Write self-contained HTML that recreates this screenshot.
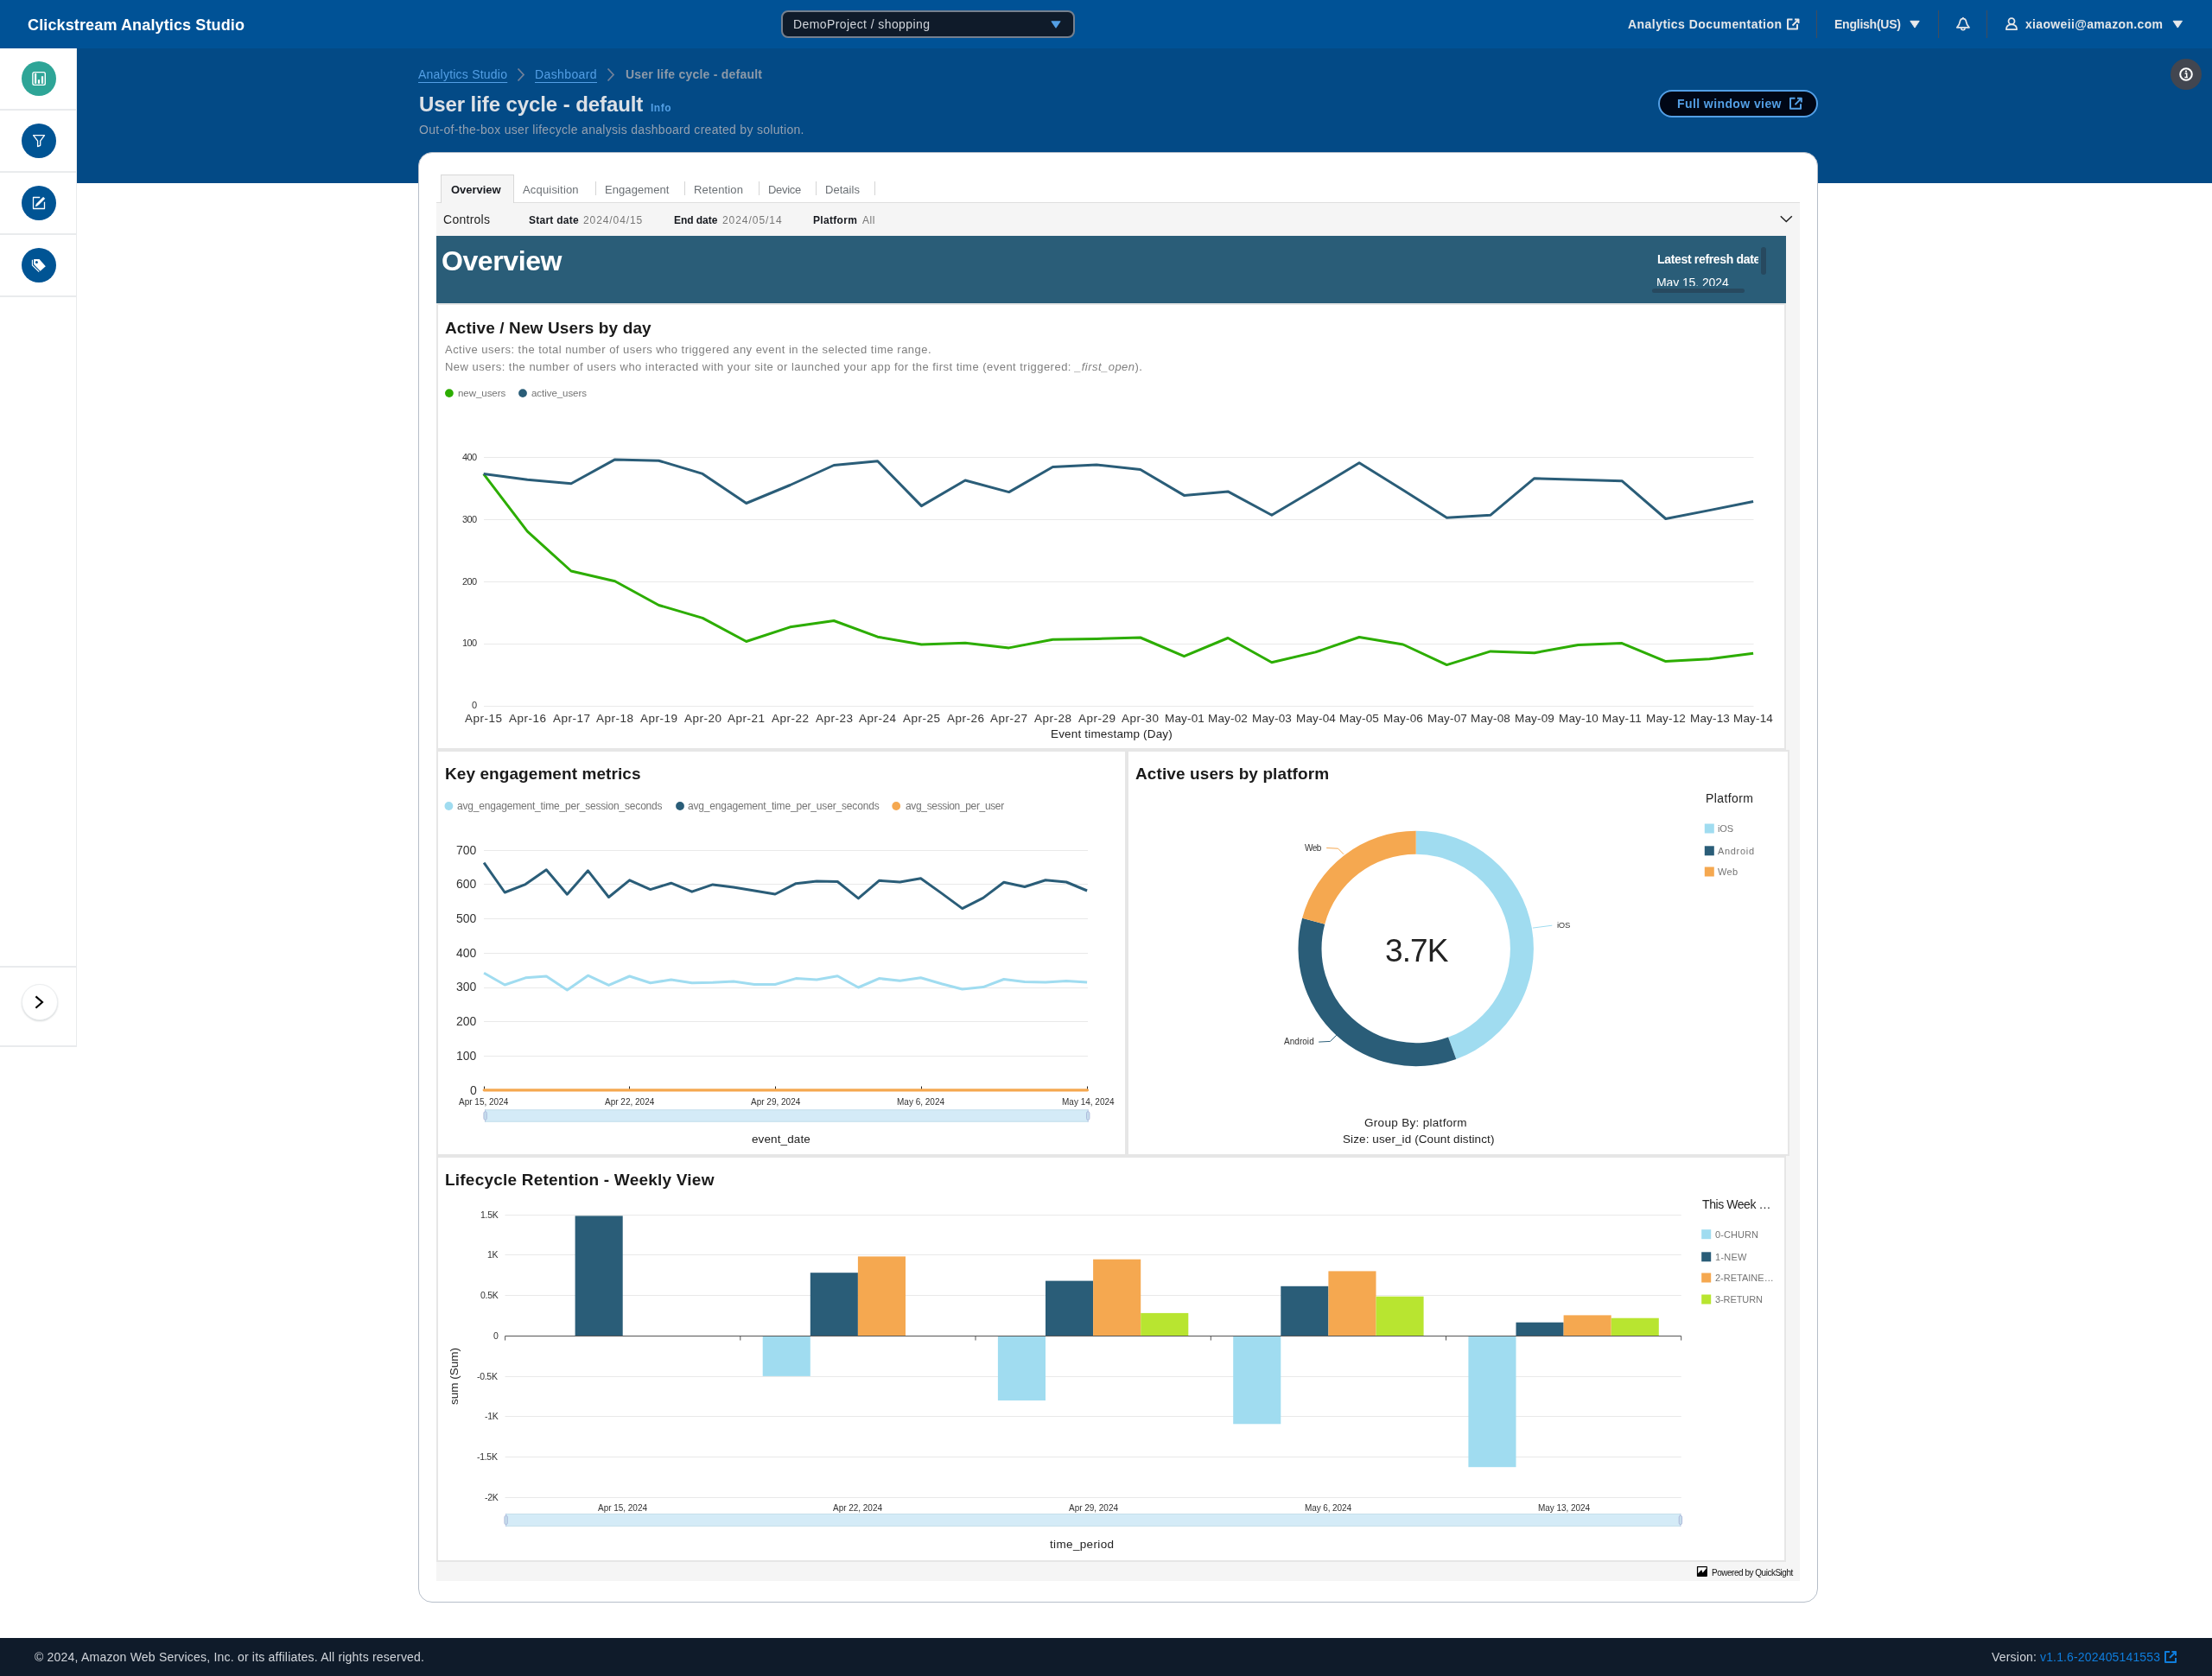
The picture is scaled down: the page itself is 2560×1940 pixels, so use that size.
<!DOCTYPE html>
<html lang="en"><head><meta charset="utf-8"><title>User life cycle - default | Clickstream Analytics Studio</title>
<style>
html,body{margin:0;padding:0;background:#fff;}
body{width:2560px;height:1940px;overflow:hidden;font-family:"Liberation Sans",sans-serif;}
#page{position:relative;width:2560px;height:1940px;overflow:hidden;background:#fff;-webkit-font-smoothing:antialiased;}
.t{will-change:transform;}
.t{position:absolute;white-space:nowrap;margin:0;padding:0;}
.b{position:absolute;box-sizing:border-box;}
svg{position:absolute;left:0;top:0;overflow:visible;}
a{color:inherit;text-decoration:none;}
.panel{position:absolute;box-sizing:border-box;background:#fff;border:2px solid #e6e6e6;}
</style></head><body><div id="page">

<header id="topnav">
<div class="b" style="left:0px;top:0px;width:2560px;height:56px;background:#005296;"></div>
<div class="t" style="left:32.40px;top:17.50px;font-size:18px;line-height:23px;color:#fff;font-weight:700;letter-spacing:0.133px;">Clickstream Analytics Studio</div>
<div class="b" style="left:904px;top:12px;width:340px;height:32px;background:#0f1b2a;border:2px solid #75808f;border-radius:8px;"></div>
<div class="t" style="left:918.00px;top:19.40px;font-size:14px;line-height:18px;color:#d1d5db;letter-spacing:0.409px;">DemoProject / shopping</div>
<svg width="2560" height="56" viewBox="0 0 2560 56"><path d="M1216.9 24.3h10.2q.6 0 .3.6l-4.9 7.3q-.5.7-1 0l-4.9-7.3q-.3-.6.3-.6z" fill="#539fe5"/></svg>
<a href="#" class="t" style="left:1884.40px;top:18.80px;font-size:14px;line-height:18px;color:#e4e6e9;font-weight:700;letter-spacing:0.453px;">Analytics Documentation</a>
<div class="t" style="left:2123.30px;top:18.80px;font-size:14px;line-height:18px;color:#e4e6e9;font-weight:700;letter-spacing:-0.233px;">English(US)</div>
<div class="t" style="left:2344.20px;top:18.80px;font-size:14px;line-height:18px;color:#e4e6e9;font-weight:700;letter-spacing:0.338px;">xiaoweii@amazon.com</div>
<div class="b" style="left:2102px;top:12px;width:1px;height:32px;background:#414d5c;"></div>
<div class="b" style="left:2243px;top:12px;width:1px;height:32px;background:#414d5c;"></div>
<div class="b" style="left:2299px;top:12px;width:1px;height:32px;background:#414d5c;"></div>
<svg width="2560" height="56" viewBox="0 0 2560 56" fill="none" stroke="#e4e6e9" stroke-width="2" stroke-linejoin="round">
<path d="M2074.5 22.5h-5.5v11h11v-5.5"/><path d="M2077 22.5h4.5v4.5M2081 23l-6.5 6.5"/>
<path d="M2210.8 24.3h10.4l-5.2 7.8z" fill="#e9ebed" stroke-width="1"/>
<path d="M2515.1 24.3h10.4l-5.2 7.8z" fill="#e9ebed" stroke-width="1"/>
<path d="M2264.800 31.800C2266.600 30 2268 27.600 2268.300 25.200C2268.600 22.900 2270 21.700 2271.900 21.700C2273.800 21.700 2275.200 22.900 2275.500 25.200C2275.800 27.600 2277.200 30 2279 31.800Z" stroke-width="1.700"/><path d="M2271.900 20.100v1.600" stroke-width="1.700"/><path d="M2269.700 32.600a2.200 2.200 0 0 0 4.400 0" stroke-width="1.600"/>
<circle cx="2328" cy="24.600" r="3.500" stroke-width="1.800"/><path d="M2321.900 34.100c0-3.900 2.500-5.800 6.100-5.800s6.100 1.900 6.100 5.800z" stroke-width="1.800"/>
</svg>
</header>
<section id="pagehead">
<div class="b" style="left:89px;top:56px;width:2471px;height:155.5px;background:#034a86;"></div>
<a href="#" class="t" style="left:484.00px;top:77.00px;font-size:14px;line-height:18px;color:#539fe5;letter-spacing:0.226px;text-decoration:underline;text-underline-offset:4px;text-decoration-thickness:1px;">Analytics Studio</a>
<a href="#" class="t" style="left:619.20px;top:77.00px;font-size:14px;line-height:18px;color:#539fe5;letter-spacing:0.389px;text-decoration:underline;text-underline-offset:4px;text-decoration-thickness:1px;">Dashboard</a>
<div class="t" style="left:723.60px;top:77.00px;font-size:14px;line-height:18px;color:#8d99a8;font-weight:700;letter-spacing:0.229px;">User life cycle - default</div>
<svg width="2560" height="220" viewBox="0 0 2560 220" fill="none" stroke="#71819a" stroke-width="1.800"><path d="M599.500 79.500l6.500 7-6.500 7M703.500 79.500l6.500 7-6.500 7"/></svg>
<h1 class="t" style="left:484.90px;top:105.00px;font-size:24px;line-height:31px;color:#dde1e6;font-weight:700;letter-spacing:-0.089px;">User life cycle - default</h1>
<a href="#" class="t" style="left:752.50px;top:117.00px;font-size:12px;line-height:16px;color:#539fe5;font-weight:700;letter-spacing:0.503px;">Info</a>
<div class="t" style="left:484.50px;top:141.30px;font-size:14px;line-height:18px;color:#95a1b0;letter-spacing:0.303px;">Out-of-the-box user lifecycle analysis dashboard created by solution.</div>
<div class="b" style="left:1919px;top:104px;width:185px;height:32px;background:#000716;border:2px solid #539fe5;border-radius:16px;"></div>
<div class="t" style="left:1941.20px;top:111.00px;font-size:14px;line-height:18px;color:#539fe5;font-weight:700;letter-spacing:0.411px;">Full window view</div>
<svg width="2560" height="220" viewBox="0 0 2560 220" fill="none" stroke="#539fe5" stroke-width="2" stroke-linejoin="round"><path d="M2077.500 113.800h-5.500v12h12v-5.500"/><path d="M2080 113.800h4.800v4.800M2084.300 114.300l-6.800 6.800"/></svg>
<div class="b" style="left:2512px;top:68px;width:36px;height:36px;background:#424650;border-radius:50%;"></div>
<svg width="2560" height="220" viewBox="0 0 2560 220"><circle cx="2530" cy="86" r="6.800" fill="none" stroke="#fff" stroke-width="2"/><path d="M2528.600 85h2.100v4.300M2528.300 89.500h3.600" stroke="#fff" stroke-width="1.500" fill="none"/><circle cx="2530" cy="82.600" r="1.100" fill="#fff"/></svg>
</section>
<nav id="sidenav">
<div class="b" style="left:0px;top:56px;width:89px;height:1156px;background:#fff;border-right:1px solid #e9ebed;border-bottom:2px solid #e9ebed;"></div>
<div class="b" style="left:0px;top:126px;width:88px;height:2px;background:#e9ebed;"></div>
<div class="b" style="left:0px;top:198px;width:88px;height:2px;background:#e9ebed;"></div>
<div class="b" style="left:0px;top:270px;width:88px;height:2px;background:#e9ebed;"></div>
<div class="b" style="left:0px;top:342px;width:88px;height:2px;background:#e9ebed;"></div>
<div class="b" style="left:0px;top:1118px;width:88px;height:2px;background:#e9ebed;"></div>
<div class="b" style="left:25px;top:71px;width:40px;height:40px;background:#2ea597;border-radius:50%;"></div>
<div class="b" style="left:25px;top:143px;width:40px;height:40px;background:#005494;border-radius:50%;"></div>
<div class="b" style="left:25px;top:215px;width:40px;height:40px;background:#005494;border-radius:50%;"></div>
<div class="b" style="left:25px;top:287px;width:40px;height:40px;background:#005494;border-radius:50%;"></div>
<svg width="100" height="1300" viewBox="0 0 100 1300" fill="none" stroke="#fff">
<rect x="37.900" y="83.600" width="14.400" height="14.800" rx="1.800" stroke-width="1.400"/>
<path d="M41.100 85.100v11.600M45 92.300v4.400M49 88.200v8.500" stroke-width="2.200"/>
<path d="M38.600 156.600h12.900l-4.800 6.600v5.100l-3.100 1.300v-6.400z" stroke-width="1.300" stroke-linejoin="round"/>
<path d="M46.200 228.500h-7.700v13h13v-7.700" stroke-width="1.300" stroke-linejoin="round"/>
<path d="M41.300 238.700l1.100-2.700 7.700-7.700 1.600 1.600-7.700 7.700z" fill="#fff" stroke-width="0.800"/>
<path d="M39.100 300h6.400l7.300 8.200-6.200 5.600-7.500-7.900z" fill="#fff" stroke="none"/><circle cx="42.400" cy="303.500" r="1.500" fill="#005494" stroke="none"/>
<path d="M37.400 300.800v6.100l7.800 7.800" stroke-width="1.100"/>
</svg>
<div class="b" style="left:24.5px;top:1139px;width:42px;height:42px;background:#fff;border-radius:50%;border:1px solid #eceef0;box-shadow:0 1px 2px rgba(0,28,36,.18);"></div>
<svg width="100" height="1300" viewBox="0 0 100 1300"><path d="M41.400 1153.400l7.600 6.600-7.600 6.800" fill="none" stroke="#000" stroke-width="2.100"/></svg>
</nav>
<main id="content">
<div class="b" style="left:484px;top:176px;width:1620px;height:1679px;background:#fff;border:1px solid #b6bec9;border-radius:16px;"></div>
<div class="b" style="left:505px;top:234px;width:1578px;height:1596px;background:#f5f5f5;border-top:1px solid #dedede;"></div>
<div class="b" style="left:510px;top:202px;width:85px;height:33px;background:#f5f5f5;border:1px solid #d8d8d8;border-bottom:none;"></div>
<div class="t" style="left:521.50px;top:211.20px;font-size:13px;line-height:17px;color:#16191f;font-weight:700;letter-spacing:-0.045px;">Overview</div>
<div class="t" style="left:605.40px;top:211.20px;font-size:13px;line-height:17px;color:#6b7075;letter-spacing:0.173px;">Acquisition</div>
<div class="t" style="left:700.00px;top:211.20px;font-size:13px;line-height:17px;color:#6b7075;letter-spacing:0.075px;">Engagement</div>
<div class="t" style="left:803.00px;top:211.20px;font-size:13px;line-height:17px;color:#6b7075;letter-spacing:0.169px;">Retention</div>
<div class="t" style="left:889.00px;top:211.20px;font-size:13px;line-height:17px;color:#6b7075;letter-spacing:-0.307px;">Device</div>
<div class="t" style="left:955.00px;top:211.20px;font-size:13px;line-height:17px;color:#6b7075;letter-spacing:0.027px;">Details</div>
<div class="b" style="left:689px;top:210px;width:1px;height:16px;background:#d5d5d5;"></div>
<div class="b" style="left:792px;top:210px;width:1px;height:16px;background:#d5d5d5;"></div>
<div class="b" style="left:878px;top:210px;width:1px;height:16px;background:#d5d5d5;"></div>
<div class="b" style="left:944px;top:210px;width:1px;height:16px;background:#d5d5d5;"></div>
<div class="b" style="left:1012px;top:210px;width:1px;height:16px;background:#d5d5d5;"></div>
<div class="t" style="left:513.40px;top:245.20px;font-size:14px;line-height:18px;color:#222;letter-spacing:0.267px;">Controls</div>
<div class="t" style="left:611.80px;top:247.20px;font-size:12px;line-height:16px;color:#16191f;font-weight:700;letter-spacing:0.250px;">Start date</div>
<div class="t" style="left:675.20px;top:247.20px;font-size:12px;line-height:16px;color:#777;letter-spacing:0.904px;">2024/04/15</div>
<div class="t" style="left:780.20px;top:247.20px;font-size:12px;line-height:16px;color:#16191f;font-weight:700;letter-spacing:-0.053px;">End date</div>
<div class="t" style="left:836.30px;top:247.20px;font-size:12px;line-height:16px;color:#777;letter-spacing:0.949px;">2024/05/14</div>
<div class="t" style="left:941.40px;top:247.20px;font-size:12px;line-height:16px;color:#16191f;font-weight:700;letter-spacing:0.318px;">Platform</div>
<div class="t" style="left:998.00px;top:247.20px;font-size:12px;line-height:16px;color:#777;letter-spacing:0.582px;">All</div>
<svg width="2560" height="300" viewBox="0 0 2560 300"><path d="M2060.800 250.300l6.500 6.200 6.500-6.200" fill="none" stroke="#222" stroke-width="1.500"/></svg>
<div class="b" style="left:505px;top:273px;width:1562px;height:78px;background:#2a5d78;"></div>
<div class="t" style="left:511.40px;top:280.50px;font-size:32px;line-height:42px;color:#fff;font-weight:700;letter-spacing:-0.416px;">Overview</div>
<div class="b" style="left:1912px;top:281px;width:123px;height:50px;overflow:hidden;"><div class="t" style="left:6px;top:9.7px;font-size:14px;line-height:18px;font-weight:700;color:#fff;letter-spacing:-0.33px;">Latest refresh date</div><div class="t" style="left:5px;top:36.500px;font-size:14px;line-height:18px;color:#fff;letter-spacing:-0.1px;">May 15, 2024</div></div>
<div class="b" style="left:2038px;top:285.5px;width:6px;height:32.5px;background:#27495f;border-radius:3px;"></div>
<div class="b" style="left:1912px;top:333.7px;width:107px;height:5.8px;background:#27495f;border-radius:3px;"></div>
<div class="panel" style="left:505px;top:351px;width:1562px;height:517px;"></div>
<div class="panel" style="left:505px;top:868px;width:799px;height:470px;"></div>
<div class="panel" style="left:1304px;top:868px;width:767px;height:470px;"></div>
<div class="panel" style="left:505px;top:1338px;width:1562px;height:470px;"></div>
<section id="p1">
<div class="t" style="left:514.70px;top:366.90px;font-size:19px;line-height:25px;color:#1a1a1a;font-weight:700;letter-spacing:0.133px;">Active / New Users by day</div>
<div class="t" style="left:515.00px;top:395.80px;font-size:13px;line-height:17px;color:#808080;letter-spacing:0.470px;">Active users: the total number of users who triggered any event in the selected time range.</div>
<div class="t" style="left:515.00px;top:415.90px;font-size:13px;line-height:17px;color:#808080;letter-spacing:0.473px;">New users: the number of users who interacted with your site or launched your app for the first time (event triggered: <i>_first_open</i>).</div>
<div class="t" style="left:529.80px;top:447.90px;font-size:11.5px;line-height:15px;color:#747474;letter-spacing:-0.052px;">new_users</div>
<div class="t" style="left:614.90px;top:447.90px;font-size:11.5px;line-height:15px;color:#747474;letter-spacing:-0.051px;">active_users</div>
<svg width="2560" height="900" viewBox="0 0 2560 900"><circle cx="519.900" cy="455.100" r="4.900" fill="#2cad00"/><circle cx="605" cy="455.100" r="4.900" fill="#2a5d78"/><path d="M560 529.5H2029.500" stroke="#e9e9e9" stroke-width="1"/><path d="M560 601.5H2029.500" stroke="#e9e9e9" stroke-width="1"/><path d="M560 673.5H2029.500" stroke="#e9e9e9" stroke-width="1"/><path d="M560 745.5H2029.500" stroke="#e9e9e9" stroke-width="1"/><path d="M560 817.5H2029.500" stroke="#e9e9e9" stroke-width="1"/><polyline points="559.7,548.6 610.4,615.2 661.0,661.0 711.7,672.7 762.4,700.5 813.1,715.4 863.7,742.5 914.4,725.8 965.1,718.5 1015.7,737.2 1066.4,746.0 1117.1,744.3 1167.7,749.9 1218.4,740.3 1269.1,739.5 1319.8,738.0 1370.4,759.7 1421.1,738.5 1471.8,766.8 1522.4,754.9 1573.1,737.5 1623.8,746.0 1674.4,769.6 1725.1,753.9 1775.8,755.7 1826.5,746.6 1877.1,744.6 1927.8,765.6 1978.5,762.8 2029.1,756.2" fill="none" stroke="#2cad00" stroke-width="3" stroke-linejoin="round"/><polyline points="559.7,548.6 610.4,555.2 661.0,559.7 711.7,531.9 762.4,533.2 813.1,548.4 863.7,582.5 914.4,561.5 965.1,538.5 1015.7,533.7 1066.4,585.6 1117.1,556.0 1167.7,569.6 1218.4,540.5 1269.1,538.0 1319.8,543.5 1370.4,573.4 1421.1,568.9 1471.8,596.2 1522.4,566.3 1573.1,535.7 1623.8,567.3 1674.4,599.2 1725.1,596.2 1775.8,553.7 1826.5,555.2 1877.1,556.7 1927.8,600.5 1978.5,590.6 2029.1,580.5" fill="none" stroke="#2a5d78" stroke-width="3" stroke-linejoin="round"/></svg>
<div class="t" style="left:534.80px;top:522.00px;font-size:11px;line-height:14px;color:#333;letter-spacing:-0.577px;">400</div>
<div class="t" style="left:534.80px;top:593.60px;font-size:11px;line-height:14px;color:#333;letter-spacing:-0.577px;">300</div>
<div class="t" style="left:534.80px;top:665.80px;font-size:11px;line-height:14px;color:#333;letter-spacing:-0.577px;">200</div>
<div class="t" style="left:534.80px;top:737.40px;font-size:11px;line-height:14px;color:#333;letter-spacing:-0.577px;">100</div>
<div class="t" style="left:545.88px;top:809.30px;font-size:11px;line-height:14px;color:#333;">0</div>
<div class="t" style="left:538.20px;top:823.00px;font-size:13.5px;line-height:18px;color:#333;letter-spacing:0.496px;">Apr-15</div>
<div class="t" style="left:588.87px;top:823.00px;font-size:13.5px;line-height:18px;color:#333;letter-spacing:0.496px;">Apr-16</div>
<div class="t" style="left:639.54px;top:823.00px;font-size:13.5px;line-height:18px;color:#333;letter-spacing:0.496px;">Apr-17</div>
<div class="t" style="left:690.21px;top:823.00px;font-size:13.5px;line-height:18px;color:#333;letter-spacing:0.496px;">Apr-18</div>
<div class="t" style="left:740.88px;top:823.00px;font-size:13.5px;line-height:18px;color:#333;letter-spacing:0.496px;">Apr-19</div>
<div class="t" style="left:791.55px;top:823.00px;font-size:13.5px;line-height:18px;color:#333;letter-spacing:0.496px;">Apr-20</div>
<div class="t" style="left:842.22px;top:823.00px;font-size:13.5px;line-height:18px;color:#333;letter-spacing:0.496px;">Apr-21</div>
<div class="t" style="left:892.89px;top:823.00px;font-size:13.5px;line-height:18px;color:#333;letter-spacing:0.496px;">Apr-22</div>
<div class="t" style="left:943.56px;top:823.00px;font-size:13.5px;line-height:18px;color:#333;letter-spacing:0.496px;">Apr-23</div>
<div class="t" style="left:994.23px;top:823.00px;font-size:13.5px;line-height:18px;color:#333;letter-spacing:0.496px;">Apr-24</div>
<div class="t" style="left:1044.90px;top:823.00px;font-size:13.5px;line-height:18px;color:#333;letter-spacing:0.496px;">Apr-25</div>
<div class="t" style="left:1095.57px;top:823.00px;font-size:13.5px;line-height:18px;color:#333;letter-spacing:0.496px;">Apr-26</div>
<div class="t" style="left:1146.24px;top:823.00px;font-size:13.5px;line-height:18px;color:#333;letter-spacing:0.496px;">Apr-27</div>
<div class="t" style="left:1196.91px;top:823.00px;font-size:13.5px;line-height:18px;color:#333;letter-spacing:0.496px;">Apr-28</div>
<div class="t" style="left:1247.58px;top:823.00px;font-size:13.5px;line-height:18px;color:#333;letter-spacing:0.496px;">Apr-29</div>
<div class="t" style="left:1298.25px;top:823.00px;font-size:13.5px;line-height:18px;color:#333;letter-spacing:0.496px;">Apr-30</div>
<div class="t" style="left:1347.52px;top:823.00px;font-size:13.5px;line-height:18px;color:#333;letter-spacing:0.157px;">May-01</div>
<div class="t" style="left:1398.19px;top:823.00px;font-size:13.5px;line-height:18px;color:#333;letter-spacing:0.157px;">May-02</div>
<div class="t" style="left:1448.86px;top:823.00px;font-size:13.5px;line-height:18px;color:#333;letter-spacing:0.157px;">May-03</div>
<div class="t" style="left:1499.53px;top:823.00px;font-size:13.5px;line-height:18px;color:#333;letter-spacing:0.157px;">May-04</div>
<div class="t" style="left:1550.20px;top:823.00px;font-size:13.5px;line-height:18px;color:#333;letter-spacing:0.157px;">May-05</div>
<div class="t" style="left:1600.87px;top:823.00px;font-size:13.5px;line-height:18px;color:#333;letter-spacing:0.157px;">May-06</div>
<div class="t" style="left:1651.54px;top:823.00px;font-size:13.5px;line-height:18px;color:#333;letter-spacing:0.157px;">May-07</div>
<div class="t" style="left:1702.21px;top:823.00px;font-size:13.5px;line-height:18px;color:#333;letter-spacing:0.157px;">May-08</div>
<div class="t" style="left:1752.88px;top:823.00px;font-size:13.5px;line-height:18px;color:#333;letter-spacing:0.157px;">May-09</div>
<div class="t" style="left:1803.55px;top:823.00px;font-size:13.5px;line-height:18px;color:#333;letter-spacing:0.157px;">May-10</div>
<div class="t" style="left:1854.22px;top:823.00px;font-size:13.5px;line-height:18px;color:#333;letter-spacing:0.357px;">May-11</div>
<div class="t" style="left:1904.89px;top:823.00px;font-size:13.5px;line-height:18px;color:#333;letter-spacing:0.157px;">May-12</div>
<div class="t" style="left:1955.56px;top:823.00px;font-size:13.5px;line-height:18px;color:#333;letter-spacing:0.157px;">May-13</div>
<div class="t" style="left:2006.23px;top:823.00px;font-size:13.5px;line-height:18px;color:#333;letter-spacing:0.157px;">May-14</div>
<div class="t" style="left:1215.60px;top:841.30px;font-size:13.5px;line-height:18px;color:#222;letter-spacing:0.175px;">Event timestamp (Day)</div>
</section>
<section id="p2">
<div class="t" style="left:515.30px;top:883.00px;font-size:19px;line-height:25px;color:#1a1a1a;font-weight:700;letter-spacing:0.075px;">Key engagement metrics</div>
<div class="t" style="left:529.40px;top:925.40px;font-size:12px;line-height:16px;color:#747474;letter-spacing:-0.191px;">avg_engagement_time_per_session_seconds</div>
<div class="t" style="left:796.30px;top:925.40px;font-size:12px;line-height:16px;color:#747474;letter-spacing:-0.166px;">avg_engagement_time_per_user_seconds</div>
<div class="t" style="left:1047.60px;top:925.40px;font-size:12px;line-height:16px;color:#747474;letter-spacing:-0.345px;">avg_session_per_user</div>
<svg width="2560" height="1400" viewBox="0 0 2560 1400"><circle cx="519.4" cy="933" r="4.900" fill="#a0dcf0"/><circle cx="787" cy="933" r="4.900" fill="#2a5d78"/><circle cx="1037.2" cy="933" r="4.900" fill="#f5a850"/><path d="M560 984.5H1259" stroke="#e9e9e9" stroke-width="1"/><path d="M560 1023.5H1259" stroke="#e9e9e9" stroke-width="1"/><path d="M560 1063.5H1259" stroke="#e9e9e9" stroke-width="1"/><path d="M560 1103.5H1259" stroke="#e9e9e9" stroke-width="1"/><path d="M560 1143.5H1259" stroke="#e9e9e9" stroke-width="1"/><path d="M560 1182.5H1259" stroke="#e9e9e9" stroke-width="1"/><path d="M560 1222.5H1259" stroke="#e9e9e9" stroke-width="1"/><polyline points="560.1,1126.3 584.2,1140.0 608.2,1131.8 632.3,1130.0 656.4,1146.0 680.5,1129.2 704.5,1140.4 728.6,1130.0 752.7,1137.8 776.7,1134.0 800.8,1137.8 824.9,1137.3 848.9,1136.0 873.0,1139.5 897.1,1139.5 921.2,1132.6 945.2,1134.0 969.3,1129.7 993.4,1143.0 1017.4,1132.6 1041.5,1135.2 1065.6,1131.8 1089.6,1138.7 1113.7,1145.0 1137.8,1142.6 1161.8,1133.5 1185.9,1136.4 1210.0,1136.9 1234.1,1135.6 1258.1,1136.9" fill="none" stroke="#a0dcf0" stroke-width="3" stroke-linejoin="round"/><polyline points="560.1,998.7 584.2,1033.0 608.2,1023.6 632.3,1006.7 656.4,1035.2 680.5,1007.8 704.5,1038.5 728.6,1018.8 752.7,1029.6 776.7,1022.2 800.8,1032.2 824.9,1023.9 848.9,1027.0 873.0,1031.0 897.1,1035.0 921.2,1022.7 945.2,1020.1 969.3,1020.5 993.4,1039.9 1017.4,1019.3 1041.5,1021.0 1065.6,1016.7 1089.6,1033.9 1113.7,1051.6 1137.8,1039.4 1161.8,1021.3 1185.9,1026.5 1210.0,1018.8 1234.1,1021.0 1258.1,1031.0" fill="none" stroke="#2a5d78" stroke-width="3" stroke-linejoin="round"/><path d="M560.5 1257.500V1262" stroke="#222" stroke-width="1"/><path d="M728.5 1257.500V1262" stroke="#222" stroke-width="1"/><path d="M897.5 1257.500V1262" stroke="#222" stroke-width="1"/><path d="M1066.5 1257.500V1262" stroke="#222" stroke-width="1"/><path d="M1258.5 1257.500V1262" stroke="#222" stroke-width="1"/><path d="M560.200 1261.800H1258.500" stroke="#f5a850" stroke-width="3.200" stroke-linecap="round"/><rect x="561" y="1284.3" width="698.5" height="14.400000000000091" fill="#d4ebf7"/><path d="M561 1284.8H1259.5M561 1298.2H1259.5" stroke="#c6dfeb" stroke-width="1"/><path d="M561.6 1284.3V1298.7" stroke="#b4c0de" stroke-width="0.800"/><rect x="559.9" y="1286.7" width="3.400" height="9.60000000000009" rx="1.700" fill="#c6ddec" stroke="#a9b5d9" stroke-width="0.900"/><path d="M1259.2 1284.3V1298.7" stroke="#b4c0de" stroke-width="0.800"/><rect x="1257.5" y="1286.7" width="3.400" height="9.60000000000009" rx="1.700" fill="#c6ddec" stroke="#a9b5d9" stroke-width="0.900"/></svg>
<div class="t" style="left:528.24px;top:974.50px;font-size:14px;line-height:18px;color:#333;">700</div>
<div class="t" style="left:528.24px;top:1014.22px;font-size:14px;line-height:18px;color:#333;">600</div>
<div class="t" style="left:528.24px;top:1053.94px;font-size:14px;line-height:18px;color:#333;">500</div>
<div class="t" style="left:528.24px;top:1093.66px;font-size:14px;line-height:18px;color:#333;">400</div>
<div class="t" style="left:528.24px;top:1133.38px;font-size:14px;line-height:18px;color:#333;">300</div>
<div class="t" style="left:528.24px;top:1173.10px;font-size:14px;line-height:18px;color:#333;">200</div>
<div class="t" style="left:528.24px;top:1212.82px;font-size:14px;line-height:18px;color:#333;">100</div>
<div class="t" style="left:543.81px;top:1252.54px;font-size:14px;line-height:18px;color:#333;">0</div>
<div class="t" style="left:531.17px;top:1268.90px;font-size:10px;line-height:13px;color:#333;">Apr 15, 2024</div>
<div class="t" style="left:699.77px;top:1268.90px;font-size:10px;line-height:13px;color:#333;">Apr 22, 2024</div>
<div class="t" style="left:868.67px;top:1268.90px;font-size:10px;line-height:13px;color:#333;">Apr 29, 2024</div>
<div class="t" style="left:1038.48px;top:1268.90px;font-size:10px;line-height:13px;color:#333;">May 6, 2024</div>
<div class="t" style="left:1228.70px;top:1268.90px;font-size:10px;line-height:13px;color:#333;">May 14, 2024</div>
<div class="t" style="left:869.90px;top:1309.70px;font-size:13.5px;line-height:18px;color:#222;letter-spacing:0.110px;">event_date</div>
</section>
<section id="p3">
<div class="t" style="left:1313.90px;top:883.30px;font-size:19px;line-height:25px;color:#1a1a1a;font-weight:700;letter-spacing:0.103px;">Active users by platform</div>
<svg width="2560" height="1400" viewBox="0 0 2560 1400"><path d="M1638.70 961.80A136.2 136.2 0 0 1 1685.28 1225.99L1676.05 1200.61A109.2 109.2 0 0 0 1638.70 988.80Z" fill="#a0dcf0"/><path d="M1685.28 1225.99A136.2 136.2 0 0 1 1507.14 1062.75L1533.22 1069.74A109.2 109.2 0 0 0 1676.05 1200.61Z" fill="#2a5d78"/><path d="M1507.14 1062.75A136.2 136.2 0 0 1 1638.70 961.80L1638.70 988.80A109.2 109.2 0 0 0 1533.22 1069.74Z" fill="#f5a850"/><path d="M1535.200 981.500L1548.600 982.200L1555.100 988.800" fill="none" stroke="#f5a850" stroke-width="1"/><path d="M1773.900 1074.100L1796.300 1071.200" fill="none" stroke="#a0dcf0" stroke-width="1"/><path d="M1526.200 1206.100L1539.500 1205.400L1546.800 1198.200" fill="none" stroke="#2a5d78" stroke-width="1"/><rect x="1972.800" y="953.5" width="11" height="11" fill="#a0dcf0"/><rect x="1972.800" y="979.3" width="11" height="11" fill="#2a5d78"/><rect x="1972.800" y="1003.5" width="11" height="11" fill="#f5a850"/></svg>
<div class="t" style="left:1510.00px;top:975.00px;font-size:10px;line-height:13px;color:#333;letter-spacing:-0.491px;">Web</div>
<div class="t" style="left:1802.00px;top:1065.20px;font-size:9.5px;line-height:12px;color:#333;letter-spacing:-0.268px;">iOS</div>
<div class="t" style="left:1486.00px;top:1198.90px;font-size:10px;line-height:13px;color:#333;letter-spacing:0.038px;">Android</div>
<div class="t" style="left:1602.50px;top:1076.80px;font-size:37px;line-height:48px;color:#222;letter-spacing:-0.905px;">3.7K</div>
<div class="t" style="left:1579.00px;top:1290.50px;font-size:13.5px;line-height:18px;color:#222;letter-spacing:0.312px;">Group By: platform</div>
<div class="t" style="left:1553.80px;top:1309.70px;font-size:13.5px;line-height:18px;color:#222;letter-spacing:0.097px;">Size: user_id (Count distinct)</div>
<div class="t" style="left:1973.50px;top:915.30px;font-size:14px;line-height:18px;color:#222;letter-spacing:0.411px;">Platform</div>
<div class="t" style="left:1988.40px;top:952.00px;font-size:11px;line-height:14px;color:#747474;letter-spacing:-0.169px;">iOS</div>
<div class="t" style="left:1988.40px;top:977.80px;font-size:11px;line-height:14px;color:#747474;letter-spacing:0.681px;">Android</div>
<div class="t" style="left:1988.40px;top:1002.00px;font-size:11px;line-height:14px;color:#747474;letter-spacing:0.290px;">Web</div>
</section>
<section id="p4">
<div class="t" style="left:514.80px;top:1353.30px;font-size:19px;line-height:25px;color:#1a1a1a;font-weight:700;letter-spacing:0.217px;">Lifecycle Retention - Weekly View</div>
<svg width="2560" height="1940" viewBox="0 0 2560 1940"><path d="M584.500 1406.5H1945.700" stroke="#e9e9e9" stroke-width="1"/><path d="M584.500 1452.5H1945.700" stroke="#e9e9e9" stroke-width="1"/><path d="M584.500 1499.5H1945.700" stroke="#e9e9e9" stroke-width="1"/><path d="M584.500 1593.5H1945.700" stroke="#e9e9e9" stroke-width="1"/><path d="M584.500 1639.5H1945.700" stroke="#e9e9e9" stroke-width="1"/><path d="M584.500 1686.5H1945.700" stroke="#e9e9e9" stroke-width="1"/><path d="M584.500 1733.5H1945.700" stroke="#e9e9e9" stroke-width="1"/><rect x="665.6" y="1407.4" width="55.100" height="139.1" fill="#2a5d78"/><rect x="882.7" y="1546.5" width="55.100" height="46.4" fill="#a0dcf0"/><rect x="937.8" y="1473.2" width="55.100" height="73.3" fill="#2a5d78"/><rect x="992.9" y="1454.4" width="55.100" height="92.1" fill="#f5a850"/><rect x="1154.9" y="1546.5" width="55.100" height="74.6" fill="#a0dcf0"/><rect x="1210.0" y="1482.6" width="55.100" height="63.9" fill="#2a5d78"/><rect x="1265.1" y="1457.7" width="55.100" height="88.8" fill="#f5a850"/><rect x="1320.2" y="1519.9" width="55.100" height="26.6" fill="#b8e530"/><rect x="1427.2" y="1546.5" width="55.100" height="101.8" fill="#a0dcf0"/><rect x="1482.3" y="1488.8" width="55.100" height="57.7" fill="#2a5d78"/><rect x="1537.4" y="1471.4" width="55.100" height="75.1" fill="#f5a850"/><rect x="1592.5" y="1500.7" width="55.100" height="45.8" fill="#b8e530"/><rect x="1699.4" y="1546.5" width="55.100" height="151.7" fill="#a0dcf0"/><rect x="1754.5" y="1530.7" width="55.100" height="15.8" fill="#2a5d78"/><rect x="1809.6" y="1522.4" width="55.100" height="24.1" fill="#f5a850"/><rect x="1864.7" y="1525.7" width="55.100" height="20.8" fill="#b8e530"/><path d="M584.600 1546.5H1945.700" stroke="#555" stroke-width="1.200"/><path d="M584.6 1546.5v5" stroke="#555" stroke-width="1"/><path d="M856.8 1546.5v5" stroke="#555" stroke-width="1"/><path d="M1129.0 1546.5v5" stroke="#555" stroke-width="1"/><path d="M1401.3 1546.5v5" stroke="#555" stroke-width="1"/><path d="M1673.5 1546.5v5" stroke="#555" stroke-width="1"/><path d="M1945.7 1546.5v5" stroke="#555" stroke-width="1"/><rect x="585" y="1752" width="1360.2" height="15" fill="#d4ebf7"/><path d="M585 1752.5H1945.2M585 1766.5H1945.2" stroke="#c6dfeb" stroke-width="1"/><path d="M585.6 1752V1767" stroke="#b4c0de" stroke-width="0.800"/><rect x="583.9" y="1754.4" width="3.400" height="10.2" rx="1.700" fill="#c6ddec" stroke="#a9b5d9" stroke-width="0.900"/><path d="M1944.9 1752V1767" stroke="#b4c0de" stroke-width="0.800"/><rect x="1943.2" y="1754.4" width="3.400" height="10.2" rx="1.700" fill="#c6ddec" stroke="#a9b5d9" stroke-width="0.900"/><rect x="1969.200" y="1423.2" width="11" height="11" fill="#a0dcf0"/><rect x="1969.200" y="1449.3" width="11" height="11" fill="#2a5d78"/><rect x="1969.200" y="1473.5" width="11" height="11" fill="#f5a850"/><rect x="1969.200" y="1498.5" width="11" height="11" fill="#b8e530"/></svg>
<div class="t" style="left:555.70px;top:1398.80px;font-size:10.5px;line-height:14px;color:#333;letter-spacing:-0.300px;">1.5K</div>
<div class="t" style="left:564.46px;top:1445.10px;font-size:10.5px;line-height:14px;color:#333;letter-spacing:-0.300px;">1K</div>
<div class="t" style="left:555.70px;top:1491.80px;font-size:10.5px;line-height:14px;color:#333;letter-spacing:-0.300px;">0.5K</div>
<div class="t" style="left:571.46px;top:1539.00px;font-size:10.5px;line-height:14px;color:#333;letter-spacing:-0.300px;">0</div>
<div class="t" style="left:552.20px;top:1585.70px;font-size:10.5px;line-height:14px;color:#333;letter-spacing:-0.300px;">-0.5K</div>
<div class="t" style="left:560.96px;top:1632.10px;font-size:10.5px;line-height:14px;color:#333;letter-spacing:-0.300px;">-1K</div>
<div class="t" style="left:552.20px;top:1678.70px;font-size:10.5px;line-height:14px;color:#333;letter-spacing:-0.300px;">-1.5K</div>
<div class="t" style="left:560.96px;top:1725.70px;font-size:10.5px;line-height:14px;color:#333;letter-spacing:-0.300px;">-2K</div>
<div class="t" style="left:692.20px;top:1739.10px;font-size:10px;line-height:13px;color:#333;letter-spacing:-0.024px;">Apr 15, 2024</div>
<div class="t" style="left:964.42px;top:1739.10px;font-size:10px;line-height:13px;color:#333;letter-spacing:-0.024px;">Apr 22, 2024</div>
<div class="t" style="left:1236.64px;top:1739.10px;font-size:10px;line-height:13px;color:#333;letter-spacing:-0.024px;">Apr 29, 2024</div>
<div class="t" style="left:1510.36px;top:1739.10px;font-size:10px;line-height:13px;color:#333;letter-spacing:-0.104px;">May 6, 2024</div>
<div class="t" style="left:1779.58px;top:1739.10px;font-size:10px;line-height:13px;color:#333;letter-spacing:-0.054px;">May 13, 2024</div>
<div class="t" style="left:1215.00px;top:1779.30px;font-size:13.5px;line-height:18px;color:#222;letter-spacing:0.346px;">time_period</div>
<div class="t" style="left:492.8px;top:1583.9px;font-size:13.500px;line-height:18px;color:#222;transform:rotate(-90deg);transform-origin:50% 50%;">sum (Sum)</div>
<div class="t" style="left:1970.00px;top:1385.30px;font-size:14px;line-height:18px;color:#222;letter-spacing:-0.426px;">This Week …</div>
<div class="t" style="left:1984.80px;top:1421.70px;font-size:11px;line-height:14px;color:#747474;letter-spacing:0.083px;">0-CHURN</div>
<div class="t" style="left:1984.80px;top:1447.80px;font-size:11px;line-height:14px;color:#747474;letter-spacing:0.264px;">1-NEW</div>
<div class="t" style="left:1984.80px;top:1472.00px;font-size:11px;line-height:14px;color:#747474;">2-RETAINE…</div>
<div class="t" style="left:1984.80px;top:1497.00px;font-size:11px;line-height:14px;color:#747474;letter-spacing:-0.088px;">3-RETURN</div>
</section>
<svg width="2560" height="1940" viewBox="0 0 2560 1940"><rect x="1963.900" y="1813" width="12" height="12" rx="0.800" fill="#000"/><path d="M1965.200 1814.200H1974.800V1815.400L1970.600 1820.400L1969.200 1816.900L1965.200 1821.300Z" fill="#fff"/></svg>
<div class="t" style="left:1980.70px;top:1813.80px;font-size:10px;line-height:13px;color:#111;letter-spacing:-0.482px;">Powered by QuickSight</div>
</main>
<footer id="footer">
<div class="b" style="left:0px;top:1896px;width:2560px;height:44px;background:#0f1b2a;"></div>
<div class="t" style="left:40.00px;top:1909.00px;font-size:14px;line-height:18px;color:#d1d5db;letter-spacing:0.205px;">© 2024, Amazon Web Services, Inc. or its affiliates. All rights reserved.</div>
<div class="t" style="left:2304.80px;top:1909.00px;font-size:14px;line-height:18px;color:#d1d5db;letter-spacing:0.202px;">Version:</div>
<a href="#" class="t" style="left:2361.30px;top:1909.00px;font-size:14px;line-height:18px;color:#0f7ddc;letter-spacing:0.153px;">v1.1.6-202405141553</a>
<svg width="2560" height="1940" viewBox="0 0 2560 1940" fill="none" stroke="#0f7ddc" stroke-width="2" stroke-linejoin="round"><path d="M2511 1912h-5v12h12v-5"/><path d="M2513.500 1912h4.500v4.500M2517.500 1912.500l-6.500 6.500"/></svg>
</footer>
</div></body></html>
